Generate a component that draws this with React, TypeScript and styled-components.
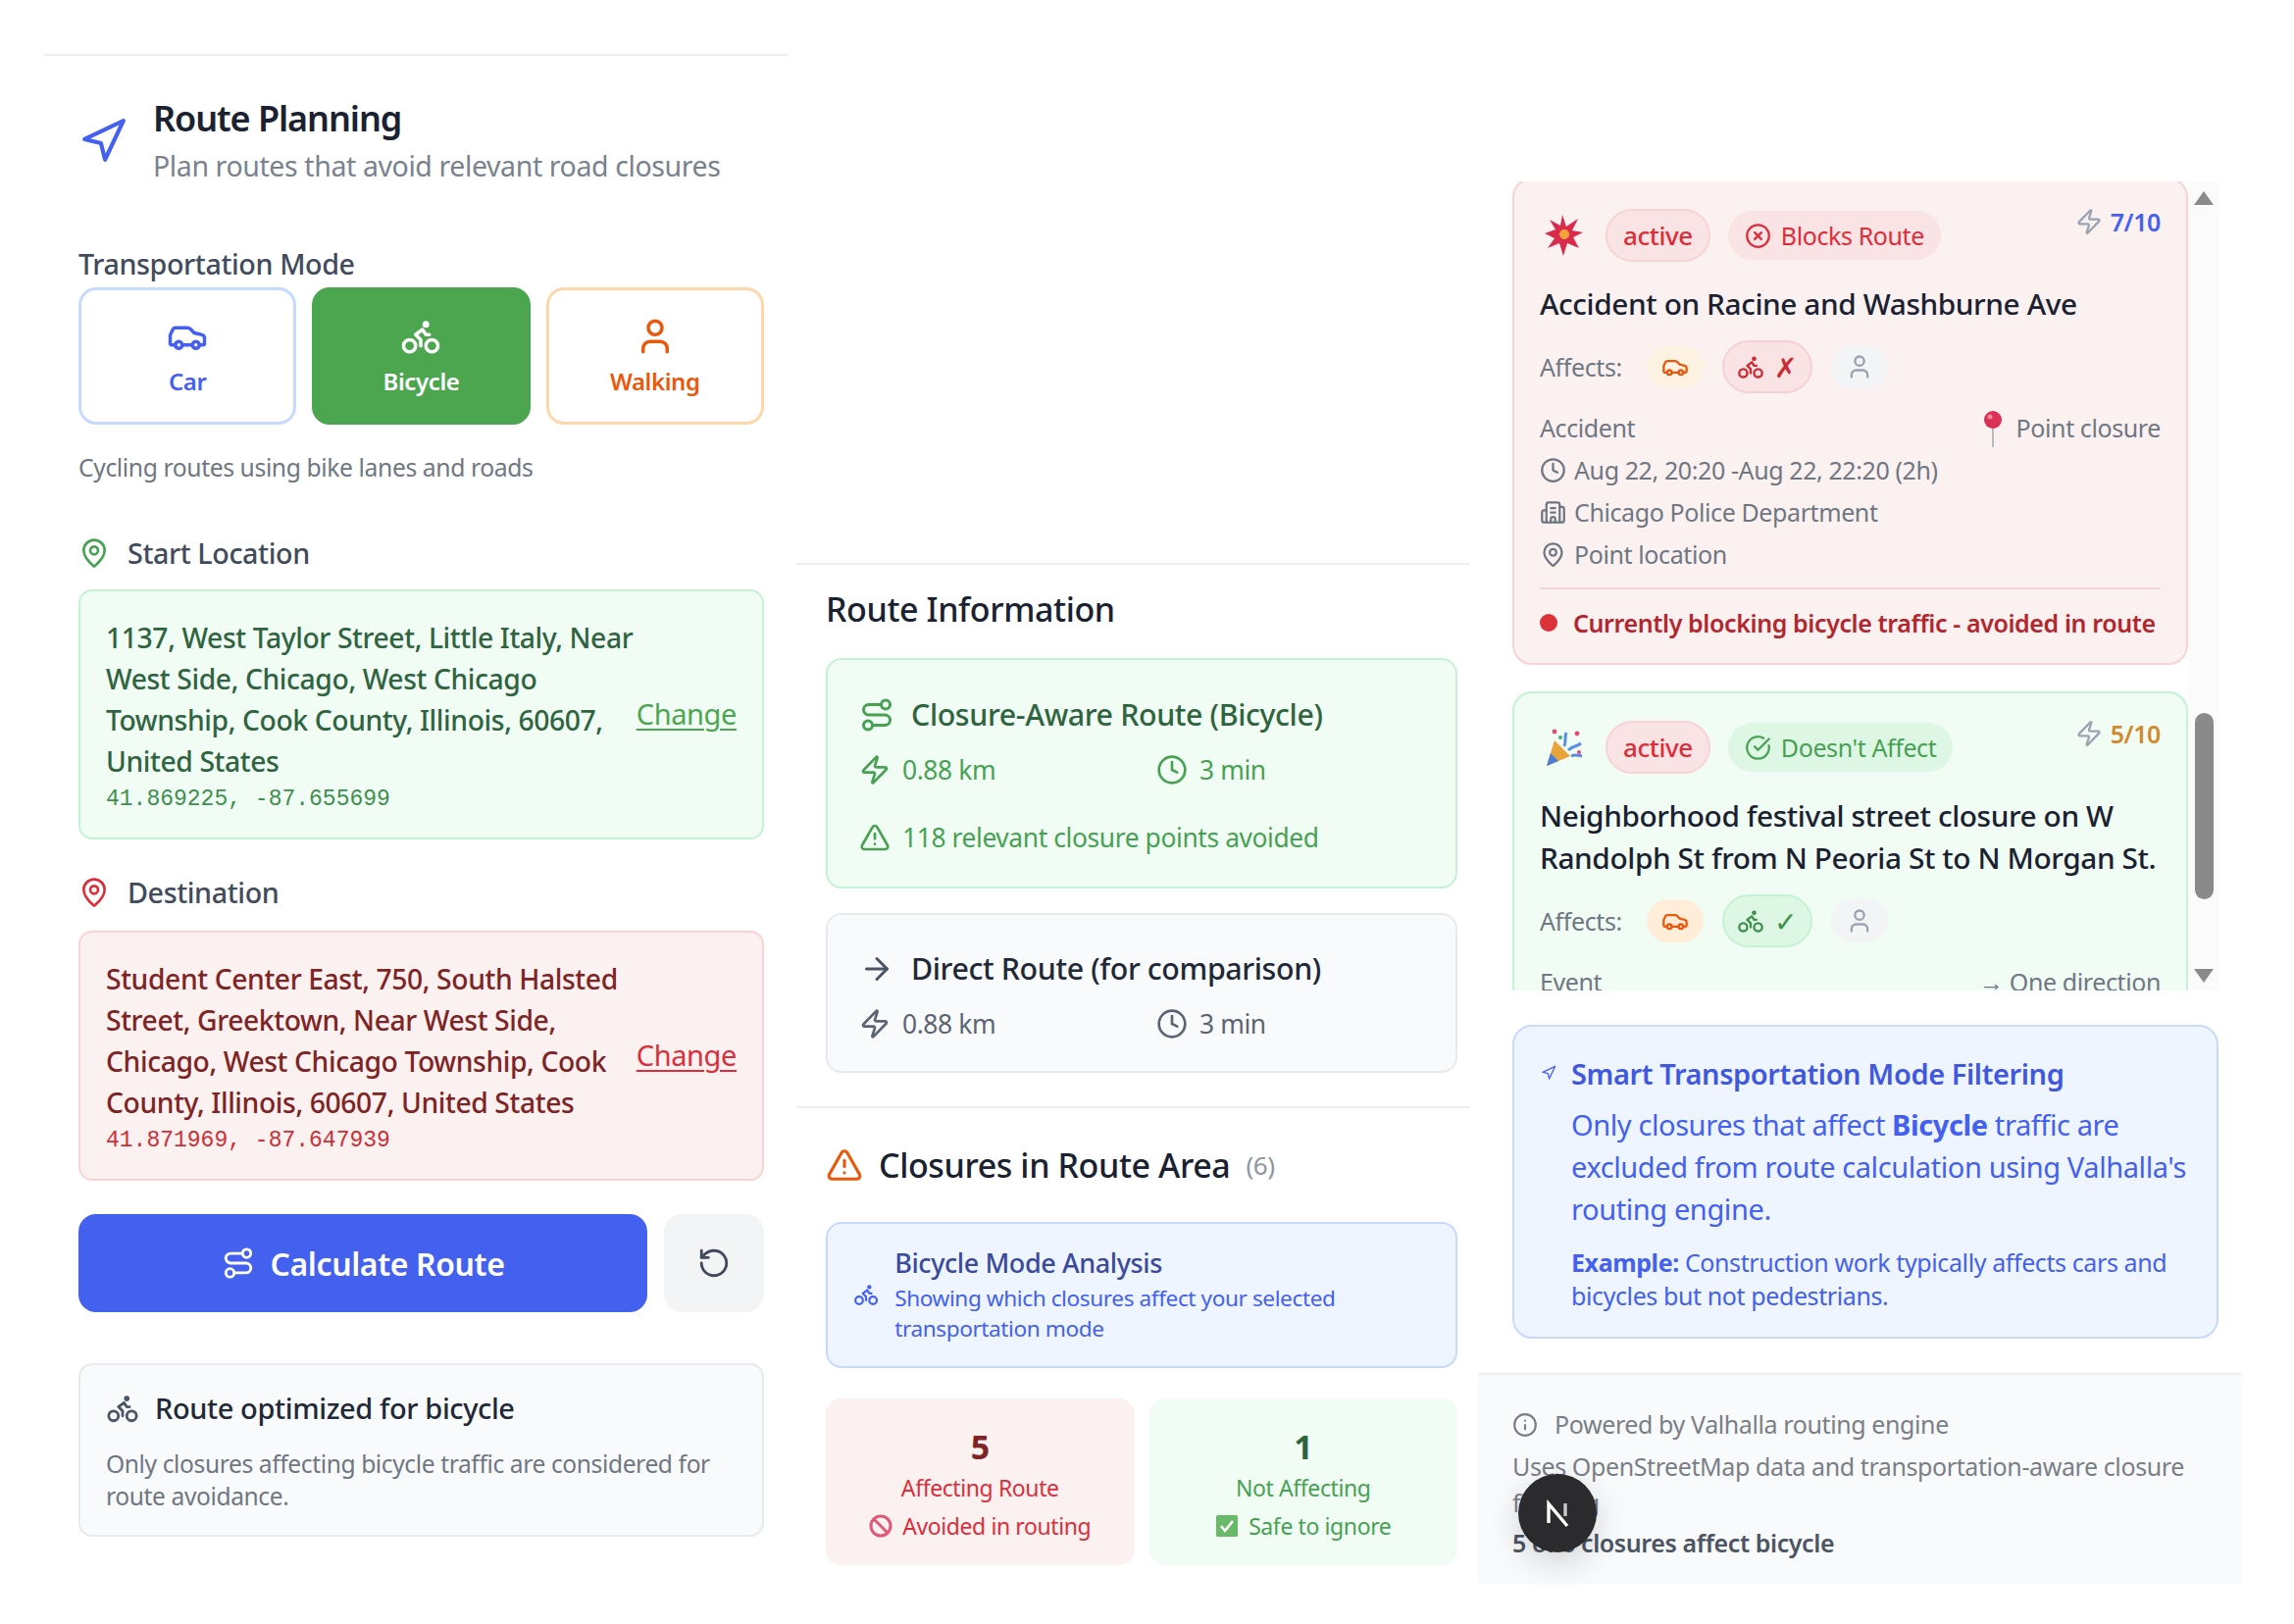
import React from "react";
import styled, {createGlobalStyle} from "styled-components";
import {
    ArrowRight, Bike, Building2, Car, CircleCheckBig, CircleX, Clock, Info, MapPin,
    Navigation, RotateCcw, Route, TriangleAlert, User, Zap,
} from "lucide-react";

type Tone = "red" | "green" | "blue" | "gray" | "orange";

const BLUE = "#4361ee";

const tones: Record<Tone, { bg: string, border: string, strong: string, text: string }> = {
    red: {bg: "#fbf1f1", border: "#f9d3d3", strong: "#7f2424", text: "#dc2e3a"},
    green: {bg: "#f1fcf5", border: "#c3f3d3", strong: "#2f6440", text: "#46a252"},
    blue: {bg: "#eff5fe", border: "#c5dafc", strong: "#3a4a9c", text: BLUE},
    gray: {bg: "#f9fafb", border: "#e8eaee", strong: "#1f2937", text: "#5b6472"},
    orange: {bg: "#fff7ed", border: "#fed7aa", strong: "#ea580c", text: "#ea580c"},
};

const GlobalStyle = createGlobalStyle`
  html, body {
    margin: 0;
    padding: 0;
    background: #fff;
  }

  body {
    font-family: "Noto Sans", "Liberation Sans", sans-serif;
    color: #1f2937;
    letter-spacing: -0.025em;
  }
`;

const Page = styled.div`
  position: relative;
  width: 2339px;
  height: 1656px;
  overflow: hidden;
  display: grid;
  grid-template-columns: 759px 687px 778px;
  column-gap: 8px;
  align-items: start;
  padding-left: 45px;
  box-sizing: border-box;
`;

const LeftColumn = styled.section`
  margin-top: 55px;
  padding: 44px 25px 0 35px;
  border-top: 2px solid #eceef1;
`;

const MiddleColumn = styled.section`
  margin-top: 574px;
`;

const RightColumn = styled.section`
  margin-top: 185px;
`;

const Header = styled.header`
  display: flex;
  align-items: center;
  gap: 26px;
  color: ${BLUE};
`;

const PageTitle = styled.h1`
  margin: 0;
  font-size: 36px;
  line-height: 40px;
  font-weight: 600;
  letter-spacing: -0.03em;
  color: #1a2232;
`;

const Subtitle = styled.p`
  margin: 10px 0 0;
  font-size: 28.5px;
  line-height: 36px;
  color: #7a828e;
`;

const FieldLabel = styled.div<{ $top: number }>`
  display: flex;
  align-items: center;
  gap: 18px;
  margin-top: ${p => p.$top}px;
  font-size: 28.7px;
  line-height: 36px;
  font-weight: 500;
  color: #414b5c;
`;

const ModeRow = styled.div`
  display: grid;
  grid-template-columns: repeat(3, 1fr);
  gap: 16px;
  margin-top: 6px;
`;

const ModeButton = styled.div<{ $tone: Tone, $active?: boolean }>`
  height: 140px;
  box-sizing: border-box;
  display: flex;
  flex-direction: column;
  align-items: center;
  justify-content: center;
  gap: 10px;
  border-radius: 18px;
  border: 3px solid ${p => p.$active ? "#4ca64f" : tones[p.$tone].border};
  background: ${p => p.$active ? "#4ca64f" : "#fff"};
  color: ${p => p.$active ? "#fff" : tones[p.$tone].text};
  font-size: 24px;
  line-height: 30px;
  font-weight: 600;
`;

const Hint = styled.p`
  margin: 28px 0 0;
  font-size: 24.7px;
  line-height: 32px;
  color: #6f7782;
`;

const AddressBox = styled.div<{ $tone: Tone, $top: number }>`
  display: flex;
  align-items: center;
  justify-content: space-between;
  margin-top: ${p => p.$top}px;
  padding: 26px 26px 23px;
  border-radius: 14px;
  background: ${p => tones[p.$tone].bg};
  border: 2px solid ${p => tones[p.$tone].border};
  color: ${p => tones[p.$tone].strong};
`;

const AddressText = styled.div`
  width: 540px;
  font-size: 28.3px;
  line-height: 42px;
  font-weight: 500;
`;

const Coordinates = styled.div<{ $tone: Tone }>`
  margin-top: 2px;
  font-family: "Liberation Mono", monospace;
  font-size: 23px;
  line-height: 32px;
  font-weight: 400;
  letter-spacing: 0;
  color: ${p => p.$tone === "green" ? "#3f8f4f" : "#cc2f36"};
`;

const ChangeLink = styled.a<{ $tone: Tone }>`
  margin-bottom: 6px;
  font-size: 29px;
  text-decoration: underline;
  text-underline-offset: 4px;
  text-decoration-thickness: 2px;
  color: ${p => p.$tone === "green" ? "#4ca64f" : "#dc2e3a"};
`;

const ActionRow = styled.div`
  display: flex;
  gap: 17px;
  margin-top: 34px;
`;

const CalculateButton = styled.div`
  flex: 1;
  height: 100px;
  display: flex;
  align-items: center;
  justify-content: center;
  gap: 16px;
  border-radius: 18px;
  background: ${BLUE};
  color: #fff;
  font-size: 32px;
  font-weight: 600;
`;

const ResetButton = styled.div`
  width: 102px;
  height: 100px;
  display: flex;
  align-items: center;
  justify-content: center;
  border-radius: 18px;
  background: #f3f4f6;
  color: #414b5c;
`;

const NoteBox = styled.div`
  margin-top: 52px;
  height: 177px;
  box-sizing: border-box;
  padding: 25px 26px;
  border-radius: 14px;
  background: #f9fafb;
  border: 2px solid #e8eaee;
`;

const NoteTitle = styled.div`
  display: flex;
  align-items: center;
  gap: 16px;
  font-size: 29px;
  line-height: 38px;
  font-weight: 500;
  color: #1f2937;
  svg {
    color: #4b5563;
  }
`;

const NoteText = styled.p`
  margin: 21px 0 0;
  font-size: 24.6px;
  line-height: 33px;
  color: #6f7782;
`;

const Section = styled.div<{ $top: number, $pad: number }>`
  margin-top: ${p => p.$top}px;
  padding: ${p => p.$pad}px 13px 0 30px;
  border-top: 2px solid #eceef1;
`;

const SectionTitle = styled.h2`
  display: flex;
  align-items: center;
  gap: 16px;
  margin: 0;
  font-size: 34px;
  line-height: 44px;
  font-weight: 500;
  color: #1a2232;
`;

const RouteCard = styled.div<{ $tone: Tone, $top: number }>`
  margin-top: ${p => p.$top}px;
  padding: ${p => p.$tone === "gray" ? "34px 34px 30px 32px" : "35px 34px 32px 32px"};
  border-radius: 16px;
  background: ${p => tones[p.$tone].bg};
  border: 2px solid ${p => tones[p.$tone].border};
  color: ${p => tones[p.$tone].text};
`;

const RouteTitle = styled.div<{ $tone: Tone }>`
  display: flex;
  align-items: center;
  gap: 17px;
  font-size: 30.4px;
  line-height: 41px;
  font-weight: 500;
  color: ${p => tones[p.$tone].strong};
`;

const Metrics = styled.div`
  display: grid;
  grid-template-columns: 303px 1fr;
  margin-top: 18px;
`;

const Metric = styled.div<{ $top?: number }>`
  display: flex;
  align-items: center;
  gap: 12px;
  margin-top: ${p => p.$top ?? 0}px;
  font-size: 26.4px;
  line-height: 36px;
`;

const Count = styled.span`
  margin-left: 0;
  font-size: 26px;
  font-weight: 400;
  color: #8f96a1;
`;

const AnalysisBox = styled.div`
  display: flex;
  align-items: center;
  gap: 16px;
  margin-top: 36px;
  padding: 22px 26px 23px;
  border-radius: 16px;
  background: ${tones.blue.bg};
  border: 2px solid ${tones.blue.border};
  color: ${BLUE};
`;

const AnalysisTitle = styled.div`
  font-size: 27px;
  line-height: 36px;
  font-weight: 500;
  color: ${tones.blue.strong};
`;

const AnalysisText = styled.div`
  margin-top: 2px;
  font-size: 22.6px;
  line-height: 31px;
`;

const StatRow = styled.div`
  display: grid;
  grid-template-columns: 1fr 1fr;
  gap: 15px;
  margin-top: 31px;
`;

const StatCard = styled.div<{ $tone: Tone }>`
  height: 170px;
  box-sizing: border-box;
  padding-top: 27px;
  border-radius: 16px;
  text-align: center;
  background: ${p => tones[p.$tone].bg};
  color: ${p => tones[p.$tone].text};
  font-size: 23px;
  line-height: 32px;
`;

const StatNumber = styled.div<{ $tone: Tone }>`
  margin-bottom: 4px;
  font-size: 34px;
  line-height: 44px;
  font-weight: 700;
  color: ${p => tones[p.$tone].strong};
`;

const StatNote = styled.div`
  display: flex;
  align-items: center;
  justify-content: center;
  gap: 10px;
  margin-top: 7px;
`;

const ListFrame = styled.div`
  display: flex;
  height: 825px;
  padding-left: 35px;
`;

const ClosureList = styled.div`
  width: 689px;
  overflow: hidden;
  display: flex;
  flex-direction: column;
  gap: 27px;
`;

const ClosureCard = styled.article<{ $tone: Tone, $top?: number, $pad: number }>`
  flex: none;
  margin-top: ${p => p.$top ?? 0}px;
  padding: ${p => p.$pad}px 26px 20px;
  border-radius: 20px;
  background: ${p => tones[p.$tone].bg};
  border: 2px solid ${p => tones[p.$tone].border};
`;

const BadgeRow = styled.div`
  display: flex;
  align-items: center;
  gap: 18px;
`;

const EmojiSlot = styled.span`
  display: flex;
  margin: 0 4px 0 5px;
`;

const Pill = styled.span<{ $tone: Tone, $outlined?: boolean }>`
  display: inline-flex;
  align-items: center;
  gap: 10px;
  height: ${p => p.$outlined ? 54 : 50}px;
  box-sizing: border-box;
  padding: 0 ${p => p.$outlined ? 16 : 17}px;
  border-radius: 27px;
  border: ${p => p.$outlined ? `2px solid ${tones[p.$tone].border}` : "none"};
  background: ${p => p.$tone === "red" ? "#f9e3e4" : "#def6e4"};
  color: ${p => p.$tone === "red" ? "#dc2e3a" : "#46a252"};
  font-size: ${p => p.$outlined ? 26 : 25}px;
  font-weight: ${p => p.$outlined ? 500 : 400};
`;

const Score = styled.span<{ $color: string }>`
  display: flex;
  align-items: center;
  gap: 8px;
  margin: -28px 0 0 auto;
  font-size: 25px;
  font-weight: 600;
  color: ${p => p.$color};
  svg {
    color: #9aa3b0;
  }
`;

const ClosureTitle = styled.h3`
  margin: 21px 0 0;
  font-size: 29.8px;
  line-height: 43px;
  font-weight: 500;
  color: #1a2232;
`;

const AffectsRow = styled.div`
  display: flex;
  align-items: center;
  gap: 19px;
  height: 54px;
  margin-top: 16px;
  font-size: 25px;
  color: #6f7782;
`;

const AffectsLabel = styled.span`
  margin-right: 6px;
`;

const Chip = styled.span<{ $bg: string, $color: string, $border?: string }>`
  display: inline-flex;
  align-items: center;
  justify-content: center;
  gap: 10px;
  width: 58px;
  height: 44px;
  box-sizing: border-box;
  border-radius: 22px;
  background: ${p => p.$bg};
  color: ${p => p.$color};
  border: ${p => p.$border ? `2px solid ${p.$border}` : "none"};
  font-size: 28px;
`;

const WideChip = styled(Chip)`
  width: 92px;
  height: 54px;
  border-radius: 27px;
`;

const TypeRow = styled.div`
  display: flex;
  justify-content: space-between;
  margin-top: 14px;
  font-size: 25px;
  line-height: 43px;
  color: #6f7782;
`;

const DetailRow = styled.div`
  display: flex;
  align-items: center;
  gap: 8px;
  font-size: 25px;
  line-height: 43px;
  color: #6f7782;
`;

const PointTag = styled.span`
  display: flex;
  align-items: center;
  gap: 14px;
`;

const BlockingNote = styled.div`
  display: flex;
  align-items: center;
  gap: 16px;
  margin-top: 12px;
  padding: 14px 0 1px;
  border-top: 2px solid #f6d5d6;
  font-size: 25px;
  line-height: 40px;
  font-weight: 600;
  white-space: nowrap;
  color: #b3262d;
`;

const Dot = styled.span`
  flex: none;
  width: 18px;
  height: 18px;
  border-radius: 50%;
  background: #dc3138;
`;

const ScrollTrack = styled.div`
  position: relative;
  width: 32px;
  background: #fbfbfb;
  display: flex;
  flex-direction: column;
  justify-content: space-between;
  align-items: flex-start;
  padding: 10px 0 8px 6px;
  box-sizing: border-box;
`;

const ScrollArrow = styled.span<{ $down?: boolean }>`
  width: 0;
  height: 0;
  border-left: 10.5px solid transparent;
  border-right: 10.5px solid transparent;
  border-${p => p.$down ? "top" : "bottom"}: 14px solid #8a8a8a;
`;

const ScrollThumb = styled.span`
  position: absolute;
  left: 7px;
  top: 542px;
  width: 19px;
  height: 190px;
  border-radius: 10px;
  background: #8a8a8a;
`;

const FilterBox = styled.div`
  display: flex;
  gap: 15px;
  width: 720px;
  height: 320px;
  box-sizing: border-box;
  margin: 35px 0 0 35px;
  padding: 26px 20px 0 27px;
  border-radius: 20px;
  background: ${tones.blue.bg};
  border: 2px solid ${tones.blue.border};
  color: ${BLUE};
`;

const FilterIcon = styled.div`
  flex: none;
  padding-top: 12px;
`;

const FilterTitle = styled.div`
  font-size: 29px;
  line-height: 44px;
  font-weight: 600;
  color: #3f58e0;
`;

const FilterBody = styled.p`
  margin: 8px 0 0;
  font-size: 29px;
  line-height: 43px;
`;

const FilterExample = styled.p`
  margin: 16px 0 0;
  font-size: 25px;
  line-height: 34px;
`;

const Footer = styled.footer`
  height: 215px;
  box-sizing: border-box;
  margin-top: 35px;
  padding: 32px 35px 0;
  background: #f9fafb;
  border-top: 2px solid #eceef1;
  font-size: 25px;
  line-height: 37px;
  color: #7a7f87;
`;

const FooterLine = styled.div`
  display: flex;
  align-items: center;
  gap: 17px;
  margin-bottom: 6px;
`;

const FooterStrong = styled.div`
  margin-top: 4px;
  font-weight: 600;
  color: #4b5563;
`;

const DevBadge = styled.div`
  position: absolute;
  left: 1548px;
  top: 1503px;
  width: 80px;
  height: 80px;
  border-radius: 50%;
  display: flex;
  align-items: center;
  justify-content: center;
  background: #2b2b2e;
  box-shadow: 0 10px 34px rgba(0, 0, 0, 0.16);
`;

const Burst = () => (
    <svg width="40" height="42" viewBox="0 0 40 42">
        <polygon fill="#d92b4b"
                 points="18,0 22,12 34,4 28,16 39,18 29,23 35,34 23,29 19,42 15,29 3,34 10,24 0,19 11,15 5,5 16,11"/>
        <circle cx="20" cy="20" r="5" fill="#f2a33a"/>
    </svg>
);

const Party = () => (
    <svg width="40" height="42" viewBox="0 0 40 42">
        <polygon fill="#e8a33a" points="2,40 10,14 26,30"/>
        <polygon fill="#4a7fd6" points="2,40 6,27 14,35"/>
        <path d="M20 20c2-6 0-9 2-14M24 24c5-5 8-3 13-7M27 30c4-2 7-1 11 0" fill="none" stroke="#5a8de0" strokeWidth="3"/>
        <circle cx="10" cy="5" r="2.4" fill="#e0487a"/>
        <circle cx="33" cy="7" r="2.4" fill="#e0487a"/>
        <circle cx="16" cy="11" r="2" fill="#3bb273"/>
        <circle cx="35" cy="26" r="2" fill="#e0487a"/>
    </svg>
);

const Pin = () => (
    <svg width="20" height="38" viewBox="0 0 20 38">
        <rect x="9" y="16" width="2" height="22" fill="#b8bcc2"/>
        <circle cx="10" cy="10" r="9" fill="#dc2f55"/>
        <circle cx="7" cy="7" r="2.5" fill="#f08aa0"/>
    </svg>
);

const NoEntry = () => (
    <svg width="24" height="24" viewBox="0 0 24 24" fill="none" stroke="#e05a78" strokeWidth="3">
        <circle cx="12" cy="12" r="10"/>
        <path d="M5 5l14 14"/>
    </svg>
);

const CheckBox = () => (
    <svg width="24" height="24" viewBox="0 0 24 24">
        <rect x="1" y="1" width="22" height="22" rx="1.5" fill="#68b968"/>
        <path d="M6 12l4 5 8-10" fill="none" stroke="#fff" strokeWidth="2.6"/>
    </svg>
);

const NextMark = () => (
    <svg width="34" height="34" viewBox="0 0 34 34" fill="none" stroke="#fff" strokeWidth="3.4">
        <path d="M8 27V7.5L27 30"/>
        <path d="M25 7v13" stroke="#c8c8c8"/>
    </svg>
);

const RouteMetrics = () => (
    <Metrics>
        <Metric><Zap size={32}/>0.88 km</Metric>
        <Metric><Clock size={32}/>3 min</Metric>
    </Metrics>
);

export default function App() {
    return (
        <Page>
            <GlobalStyle/>

            <LeftColumn>
                <Header>
                    <Navigation size={50}/>
                    <div>
                        <PageTitle>Route Planning</PageTitle>
                        <Subtitle>Plan routes that avoid relevant road closures</Subtitle>
                    </div>
                </Header>

                <FieldLabel $top={64}>Transportation Mode</FieldLabel>
                <ModeRow>
                    <ModeButton $tone="blue"><Car size={42}/>Car</ModeButton>
                    <ModeButton $tone="green" $active><Bike size={42}/>Bicycle</ModeButton>
                    <ModeButton $tone="orange"><User size={42}/>Walking</ModeButton>
                </ModeRow>
                <Hint>Cycling routes using bike lanes and roads</Hint>

                <FieldLabel $top={53}><MapPin size={32} color="#46a252"/>Start Location</FieldLabel>
                <AddressBox $tone="green" $top={19}>
                    <AddressText>
                        1137, West Taylor Street, Little Italy, Near West Side, Chicago, West Chicago
                        Township, Cook County, Illinois, 60607, United States
                        <Coordinates $tone="green">41.869225, -87.655699</Coordinates>
                    </AddressText>
                    <ChangeLink $tone="green">Change</ChangeLink>
                </AddressBox>

                <FieldLabel $top={36}><MapPin size={32} color="#dc2e3a"/>Destination</FieldLabel>
                <AddressBox $tone="red" $top={21}>
                    <AddressText>
                        Student Center East, 750, South Halsted Street, Greektown, Near West Side,
                        Chicago, West Chicago Township, Cook County, Illinois, 60607, United States
                        <Coordinates $tone="red">41.871969, -87.647939</Coordinates>
                    </AddressText>
                    <ChangeLink $tone="red">Change</ChangeLink>
                </AddressBox>

                <ActionRow>
                    <CalculateButton><Route size={34}/>Calculate Route</CalculateButton>
                    <ResetButton><RotateCcw size={34}/></ResetButton>
                </ActionRow>

                <NoteBox>
                    <NoteTitle><Bike size={34}/>Route optimized for bicycle</NoteTitle>
                    <NoteText>Only closures affecting bicycle traffic are considered for route avoidance.</NoteText>
                </NoteBox>
            </LeftColumn>

            <MiddleColumn>
                <Section $top={0} $pad={23}>
                    <SectionTitle>Route Information</SectionTitle>
                    <RouteCard $tone="green" $top={28}>
                        <RouteTitle $tone="green"><Route size={36} color="#46a252"/>Closure-Aware Route (Bicycle)</RouteTitle>
                        <RouteMetrics/>
                        <Metric $top={33}><TriangleAlert size={32}/>118 relevant closure points avoided</Metric>
                    </RouteCard>
                    <RouteCard $tone="gray" $top={25}>
                        <RouteTitle $tone="gray"><ArrowRight size={36} color="#4b5563"/>Direct Route (for comparison)</RouteTitle>
                        <RouteMetrics/>
                    </RouteCard>
                </Section>

                <Section $top={34} $pad={36}>
                    <SectionTitle>
                        <TriangleAlert size={38} color="#ea580c"/>
                        Closures in Route Area
                        <Count>(6)</Count>
                    </SectionTitle>
                    <AnalysisBox>
                        <Bike size={32}/>
                        <div>
                            <AnalysisTitle>Bicycle Mode Analysis</AnalysisTitle>
                            <AnalysisText>Showing which closures affect your selected transportation mode</AnalysisText>
                        </div>
                    </AnalysisBox>
                    <StatRow>
                        <StatCard $tone="red">
                            <StatNumber $tone="red">5</StatNumber>
                            Affecting Route
                            <StatNote><NoEntry/>Avoided in routing</StatNote>
                        </StatCard>
                        <StatCard $tone="green">
                            <StatNumber $tone="green">1</StatNumber>
                            Not Affecting
                            <StatNote><CheckBox/>Safe to ignore</StatNote>
                        </StatCard>
                    </StatRow>
                </Section>
            </MiddleColumn>

            <RightColumn>
                <ListFrame>
                    <ClosureList>
                        <ClosureCard $tone="red" $top={-4} $pad={30}>
                            <BadgeRow>
                                <EmojiSlot><Burst/></EmojiSlot>
                                <Pill $tone="red" $outlined>active</Pill>
                                <Pill $tone="red"><CircleX size={27}/>Blocks Route</Pill>
                                <Score $color={BLUE}><Zap size={28}/>7/10</Score>
                            </BadgeRow>
                            <ClosureTitle>Accident on Racine and Washburne Ave</ClosureTitle>
                            <AffectsRow>
                                <AffectsLabel>Affects:</AffectsLabel>
                                <Chip $bg="#fef3e2" $color="#ea580c"><Car size={28}/></Chip>
                                <WideChip $bg="#f9e3e4" $color="#cc2a31" $border="#f6d0d2"><Bike size={28}/>✗</WideChip>
                                <Chip $bg="#f3f4f6" $color="#9ca3af"><User size={28}/></Chip>
                            </AffectsRow>
                            <TypeRow>
                                Accident
                                <PointTag><Pin/>Point closure</PointTag>
                            </TypeRow>
                            <DetailRow><Clock size={27}/>Aug 22, 20:20 -Aug 22, 22:20 (2h)</DetailRow>
                            <DetailRow><Building2 size={27}/>Chicago Police Department</DetailRow>
                            <DetailRow><MapPin size={27}/>Point location</DetailRow>
                            <BlockingNote><Dot/>Currently blocking bicycle traffic - avoided in route</BlockingNote>
                        </ClosureCard>

                        <ClosureCard $tone="green" $pad={28}>
                            <BadgeRow>
                                <EmojiSlot><Party/></EmojiSlot>
                                <Pill $tone="red" $outlined>active</Pill>
                                <Pill $tone="green"><CircleCheckBig size={27}/>Doesn't Affect</Pill>
                                <Score $color="#d08a2e"><Zap size={28}/>5/10</Score>
                            </BadgeRow>
                            <ClosureTitle>Neighborhood festival street closure on W Randolph St from N Peoria St to N Morgan St.</ClosureTitle>
                            <AffectsRow>
                                <AffectsLabel>Affects:</AffectsLabel>
                                <Chip $bg="#ffedd9" $color="#ea580c"><Car size={28}/></Chip>
                                <WideChip $bg="#def6e4" $color="#3f8f4f" $border="#c3f3d3"><Bike size={28}/>✓</WideChip>
                                <Chip $bg="#f3f4f6" $color="#9ca3af"><User size={28}/></Chip>
                            </AffectsRow>
                            <TypeRow>
                                Event
                                <span>→ One direction</span>
                            </TypeRow>
                        </ClosureCard>
                    </ClosureList>
                    <ScrollTrack>
                        <ScrollArrow/>
                        <ScrollThumb/>
                        <ScrollArrow $down/>
                    </ScrollTrack>
                </ListFrame>

                <FilterBox>
                    <FilterIcon><Navigation size={16}/></FilterIcon>
                    <div>
                        <FilterTitle>Smart Transportation Mode Filtering</FilterTitle>
                        <FilterBody>
                            Only closures that affect <strong>Bicycle</strong> traffic are excluded from route calculation using Valhalla's routing engine.
                        </FilterBody>
                        <FilterExample>
                            <strong>Example:</strong> Construction work typically affects cars and bicycles but not pedestrians.
                        </FilterExample>
                    </div>
                </FilterBox>

                <Footer>
                    <FooterLine><Info size={26}/>Powered by Valhalla routing engine</FooterLine>
                    <div>Uses OpenStreetMap data and transportation-aware closure filtering</div>
                    <FooterStrong>5 of 6 closures affect bicycle</FooterStrong>
                </Footer>
            </RightColumn>

            <DevBadge><NextMark/></DevBadge>
        </Page>
    );
}
